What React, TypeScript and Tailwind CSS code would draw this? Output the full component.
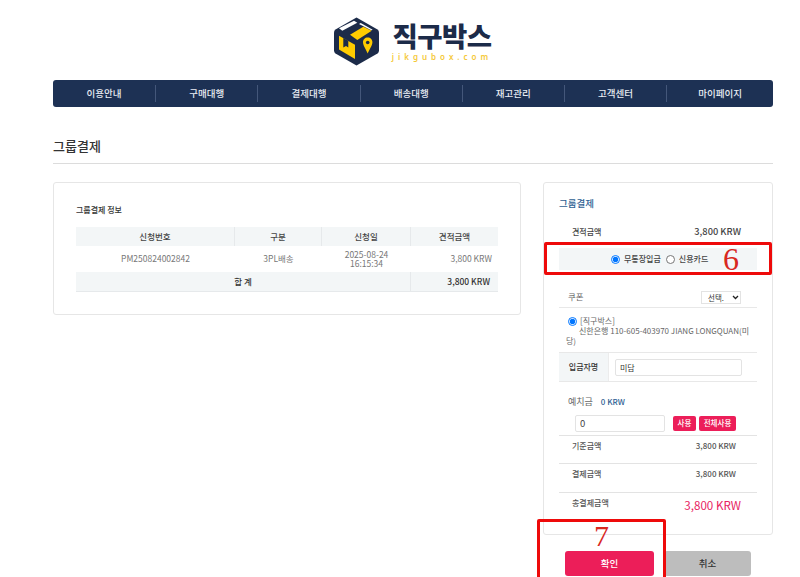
import React from "react";

const font = { fontFamily: '"Noto Sans CJK KR", "Noto Sans", sans-serif' };
const nav = ["이용안내", "구매대행", "결제대행", "배송대행", "재고관리", "고객센터"];

function Logo() {
  return (
    <svg width="45" height="49" viewBox="0 0 45 49" className="block">
      <path d="M22.5 0.5 L43.5 12.5 Q45 13.5 45 15.5 V33.5 Q45 35.5 43.5 36.5 L22.5 48.5 L1.5 36.5 Q0 35.5 0 33.5 V15.5 Q0 13.5 1.5 12.5 Z" fill="#1c2b49" />
      <path d="M5 18.7 L21 27.7 V42 L5 32.5 Z" fill="#ffcc00" />
      <path d="M9.3 21 L14.3 23.7 V30.5 L12 29 L9.3 30.5 Z" fill="#1c2b49" />
      <path d="M5 11.3 L20 3.7 L23.3 5.7 L8.3 13.7 Z" fill="#ffffff" />
      <path d="M16 17.7 L29.3 9.7 L37.7 13.7 L23.3 23 Z" fill="#ffcc00" />
      <path d="M25 7 L26.7 6 L38.7 12.7 L37.3 13.3 Z" fill="#ffffff" />
      <path d="M33.7 20.5 C36.5 20.5 38.4 22.6 38.4 25.3 C38.4 28.5 35.3 32.5 33.7 36.5 C32.1 32.5 29 28.5 29 25.3 C29 22.6 30.9 20.5 33.7 20.5 Z" fill="#ffcc00" />
      <circle cx="33.7" cy="25.5" r="1.8" fill="#1c2b49" />
    </svg>
  );
}

function Row({ label, value, h }: { label: string; value: string; h: string }) {
  return (
    <div className={`flex ${h} justify-between border-t border-[#e3e3e3] pl-[13px] pr-[21px] pt-[3px] text-[8px] leading-[14px] text-[#555]`}>
      <span className="font-medium">{label}</span>
      <span className="font-medium">{value}</span>
    </div>
  );
}

export default function App() {
  return (
    <div className="relative h-[577px] w-[800px] overflow-hidden bg-white" style={font}>
      <header className="flex h-[80px] items-start justify-center pl-[26px] pt-[17px]">
        <div className="flex items-start gap-[13px]">
          <Logo />
          <div className="flex flex-col items-center">
            <span className="mt-[1px] text-[27.5px] font-black leading-[34px] tracking-[-0.5px] text-[#1c2b49]">직구박스</span>
            <span className="text-[8px] font-semibold leading-[10px] tracking-[4px] text-[#f5c93a]" style={{ fontFamily: '"Noto Sans", sans-serif' }}>jikgubox.com</span>
          </div>
        </div>
      </header>

      <main className="mx-[53px] w-[720px]">
        <nav className="flex h-[27px] items-center rounded-[3px] bg-[#1d3154]">
          {nav.map((n, i) => (
            <div key={n} className={`flex h-[17px] w-[102.2px] items-center justify-center text-[9.5px] font-medium text-[#e9edf3] ${i ? "border-l border-[#44577a]" : ""}`}>
              {n}
            </div>
          ))}
          <div className="flex h-[17px] flex-1 items-center justify-center border-l border-[#44577a] text-[9.5px] font-medium text-[#e9edf3]">마이페이지</div>
        </nav>

        <h1 className="mt-[29px] border-b border-[#dcdcdc] pb-[8px] text-[13px] font-medium leading-[19px] text-[#333]">그룹결제</h1>

        <div className="mt-[18px] flex items-start gap-[22px]">
          <section className="h-[133px] w-[468px] rounded-[3px] border border-[#e6e6e6] px-[22px] pt-[21px]">
            <h2 className="text-[8px] font-medium leading-[11px] text-[#333]">그룹결제 정보</h2>
            <div className="mt-[12px] border-b border-[#e6e9eb] text-center text-[8.5px] text-[#777]">
              <div className="grid h-[19px] grid-cols-[159px_87px_89px_87px] items-center bg-[#f3f6f7] font-medium text-[#444]">
                <div className="flex h-full items-center justify-center border-r border-[#e6e9eb]">신청번호</div>
                <div className="flex h-full items-center justify-center border-r border-[#e6e9eb]">구분</div>
                <div className="flex h-full items-center justify-center border-r border-[#e6e9eb]">신청일</div>
                <div>견적금액</div>
              </div>
              <div className="grid h-[26px] grid-cols-[159px_87px_89px_87px] items-center leading-[9.5px]">
                <div>PM250824002842</div>
                <div>3PL배송</div>
                <div>2025-08-24<br />16:15:34</div>
                <div className="pr-[6px] text-right">3,800 KRW</div>
              </div>
              <div className="grid h-[19px] grid-cols-[335px_87px] items-center bg-[#f3f6f7] font-medium text-[#333]">
                <div className="flex h-full items-center justify-center border-r border-[#e6e9eb]">합 계</div>
                <div className="pr-[8px] text-right">3,800 KRW</div>
              </div>
            </div>
          </section>

          <div className="w-[230px]">
            <section className="h-[353px] rounded-[3px] border border-[#e6e6e6] px-[15px] pt-[13px]">
              <h2 className="text-[9.5px] font-medium leading-[14px] text-[#2f5f93]">그룹결제</h2>
              <div className="mt-[10px] flex h-[24px] items-center justify-between pl-[13px] pr-[16px] text-[#444]">
                <span className="text-[8px] font-medium">견적금액</span>
                <span className="text-[9.3px] font-medium">3,800 KRW</span>
              </div>
              <div className="mt-[4px] flex h-[22px] items-center bg-[#f3f6f7] pl-[52px] text-[8px] font-medium text-[#444]">
                <input type="radio" name="pay" defaultChecked className="m-0 h-[9px] w-[9px]" />
                <span className="ml-[4px]">무통장입금</span>
                <input type="radio" name="pay" className="m-0 ml-[5px] h-[9px] w-[9px]" />
                <span className="ml-[4px]">신용카드</span>
              </div>
              <div className="flex h-[38px] items-end justify-between border-b border-[#e8e8e8] pb-[3px] pl-[9px] pr-[16px]">
                <span className="pb-[1px] text-[8.5px] text-[#666]">쿠폰</span>
                <div className="flex h-[13px] w-[40px] items-center justify-between border border-[#e3e3e3] pl-[6px] pr-[1.5px] text-[7.5px] text-[#333]">
                  <span>선택.</span>
                  <svg width="7" height="5" viewBox="0 0 7 5"><path d="M1 1 L3.5 3.5 L6 1" fill="none" stroke="#222" strokeWidth="1.3" /></svg>
                </div>
              </div>
              <div className="h-[45px] border-b border-[#e8e8e8] pl-[7px] pt-[8px] text-[8px] leading-[10px] text-[#666]">
                <div className="flex items-center">
                  <input type="radio" name="bank" defaultChecked className="m-0 ml-[2px] mr-[3px] h-[9px] w-[9px]" />
                  <span>[직구박스]</span>
                </div>
                <div className="whitespace-nowrap pl-[13px]">신한은행 110-605-403970 JIANG LONGQUAN(미</div>
                <div>당)</div>
              </div>
              <div className="flex h-[29px] border-b border-[#e8e8e8]">
                <div className="flex w-[50px] items-center justify-center border-r border-[#ececec] bg-[#f3f6f7] text-[8px] font-medium text-[#333]">입금자명</div>
                <div className="flex flex-1 items-center pl-[6px]">
                  <input readOnly defaultValue="미담" className="h-[17px] w-[127px] rounded-[2px] border border-[#e3e3e3] pl-[4px] text-[8px] text-[#333]" />
                </div>
              </div>
              <div className="flex items-center gap-[8px] pl-[9px] pt-[10px]">
                <span className="text-[9px] leading-[20px] text-[#666]">예치금</span>
                <span className="text-[8px] font-medium text-[#2f5f93]">0 KRW</span>
              </div>
              <div className="mt-[2px] flex h-[18px] items-center pl-[16px]">
                <input readOnly defaultValue="0" className="h-[17px] w-[90px] rounded-[2px] border border-[#e3e3e3] pl-[4px] text-[9.5px] text-[#444]" />
                <span className="ml-[8px] flex h-[15px] w-[23px] items-center justify-center rounded-[2px] bg-[#ec1e59] text-[7.5px] font-medium text-white">사용</span>
                <span className="ml-[3px] flex h-[15px] w-[37px] items-center justify-center rounded-[2px] bg-[#ec1e59] text-[7.5px] font-medium text-white">전체사용</span>
              </div>
              <div className="mt-[3px]">
                <Row label="기준금액" value="3,800 KRW" h="h-[28px]" />
                <Row label="결제금액" value="3,800 KRW" h="h-[29px]" />
                <div className="flex justify-between border-t border-[#e3e3e3] pl-[13px] pr-[16px] pt-[2px] text-[#555]">
                  <span className="text-[8px] font-medium leading-[16px]">총결제금액</span>
                  <span className="text-[11.6px] font-normal leading-[20px] text-[#e8225f]">3,800 KRW</span>
                </div>
              </div>
            </section>
            <div className="mt-[16px] flex gap-[10px] pl-[22px]">
              <button className="h-[25px] w-[89px] rounded-[3px] bg-[#ec1e59] text-[9.5px] font-medium text-white">확인</button>
              <button className="h-[25px] w-[87px] rounded-[3px] bg-[#bdbdbd] text-[9.5px] font-medium text-[#333]">취소</button>
            </div>
          </div>
        </div>
      </main>

      <div className="absolute left-[544px] top-[242px] h-[33px] w-[228px] rounded-[2px] border-[3px] border-[#ee0a0a]" />
      <span className="absolute left-[723px] top-[237px] text-[32px] leading-[44px] text-[#d8281f]" style={{ fontFamily: '"Liberation Serif", serif' }}>6</span>
      <div className="absolute left-[537px] top-[519px] h-[70px] w-[129px] rounded-[2px] border-[3px] border-[#ee0a0a]" />
      <span className="absolute left-[594px] top-[515px] text-[30px] leading-[42px] text-[#d8281f]" style={{ fontFamily: '"Liberation Serif", serif' }}>7</span>
    </div>
  );
}
